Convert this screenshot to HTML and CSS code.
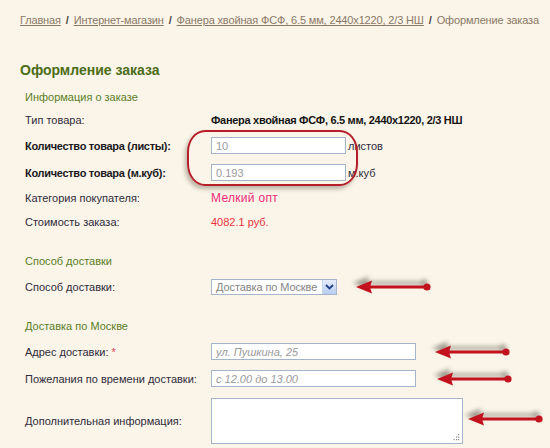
FILE: index.html
```html
<!DOCTYPE html>
<html lang="ru">
<head>
<meta charset="utf-8">
<title>Оформление заказа</title>
<link rel="stylesheet" href="styles.css">
</head>
<body>
<div class="page">
  <div class="crumbs">
    <a href="#">Главная</a><span class="sep">/</span><a href="#">Интернет-магазин</a><span class="sep">/</span><a href="#">Фанера хвойная ФСФ, 6.5 мм, 2440x1220, 2/3 НШ</a><span class="sep">/</span><span class="cur">Оформление заказа</span>
  </div>

  <h1 class="title">Оформление заказа</h1>

  <section class="sec sec-info">
    <h2 class="sec-head">Информация о заказе</h2>
    <div class="row">
      <div class="lbl">Тип товара:</div>
      <div class="val strong">Фанера хвойная ФСФ, 6.5 мм, 2440x1220, 2/3 НШ</div>
    </div>
    <div class="row field">
      <div class="lbl bold">Количество товара (листы):</div>
      <div class="val"><input class="inp inp-s" type="text" value="10"><span class="unit">листов</span></div>
    </div>
    <div class="row field">
      <div class="lbl bold">Количество товара (м.куб):</div>
      <div class="val"><input class="inp inp-s" type="text" value="0.193"><span class="unit">м.куб</span></div>
    </div>
    <div class="row">
      <div class="lbl">Категория покупателя:</div>
      <div class="val pink">Мелкий опт</div>
    </div>
    <div class="row">
      <div class="lbl">Стоимость заказа:</div>
      <div class="val price">4082.1 руб.</div>
    </div>
    <div class="highlight"></div>
  </section>

  <section class="sec sec-ship">
    <h2 class="sec-head">Способ доставки</h2>
    <div class="row field">
      <div class="lbl">Способ доставки:</div>
      <div class="val">
        <div class="sel"><span class="sel-text">Доставка по Москве</span><span class="sel-btn"><svg width="9" height="6" viewBox="0 0 9 6"><path d="M1 1 L4.5 4.5 L8 1" fill="none" stroke="#1f3f86" stroke-width="1.8"/></svg></span></div>
        <svg class="arrow" width="76" height="20" viewBox="0 0 76 20"><line x1="10" y1="10" x2="71" y2="10" stroke="#c3121d" stroke-width="3"/><polygon points="0,10 16,3.5 14,10 16,16.5" fill="#c3121d"/><circle cx="71" cy="10" r="3.6" fill="#c3121d"/></svg>
      </div>
    </div>
  </section>

  <section class="sec sec-moscow">
    <h2 class="sec-head">Доставка по Москве</h2>
    <div class="row field">
      <div class="lbl">Адрес доставки: <span class="req">*</span></div>
      <div class="val">
        <input class="inp inp-l" type="text" placeholder="ул. Пушкина, 25">
        <svg class="arrow" width="76" height="20" viewBox="0 0 76 20"><line x1="10" y1="10" x2="71" y2="10" stroke="#c3121d" stroke-width="3"/><polygon points="0,10 16,3.5 14,10 16,16.5" fill="#c3121d"/><circle cx="71" cy="10" r="3.6" fill="#c3121d"/></svg>
      </div>
    </div>
    <div class="row field">
      <div class="lbl">Пожелания по времени доставки:</div>
      <div class="val">
        <input class="inp inp-l" type="text" placeholder="с 12.00 до 13.00">
        <svg class="arrow arrow-t" width="76" height="20" viewBox="0 0 76 20"><line x1="10" y1="10" x2="71" y2="10" stroke="#c3121d" stroke-width="3"/><polygon points="0,10 16,3.5 14,10 16,16.5" fill="#c3121d"/><circle cx="71" cy="10" r="3.6" fill="#c3121d"/></svg>
      </div>
    </div>
    <div class="row area">
      <div class="lbl">Дополнительная информация:</div>
      <div class="val">
        <div class="area-wrap">
          <textarea class="ta"></textarea>
          <svg class="grip" width="7" height="7" viewBox="0 0 7 7"><g fill="#8a8a8a"><rect x="5" y="0" width="1.2" height="1.2"/><rect x="3" y="2.5" width="1.2" height="1.2"/><rect x="5" y="2.5" width="1.2" height="1.2"/><rect x="0.5" y="5" width="1.2" height="1.2"/><rect x="3" y="5" width="1.2" height="1.2"/><rect x="5" y="5" width="1.2" height="1.2"/></g></svg>
        </div>
        <svg class="arrow arrow-a" width="76" height="20" viewBox="0 0 76 20"><line x1="10" y1="10" x2="71" y2="10" stroke="#c3121d" stroke-width="3"/><polygon points="0,10 16,3.5 14,10 16,16.5" fill="#c3121d"/><circle cx="71" cy="10" r="3.6" fill="#c3121d"/></svg>
      </div>
    </div>
  </section>
</div>
</body>
</html>
```
FILE: styles.css
```css
html, body {
  margin: 0;
  padding: 0;
}
body {
  background: #fbf5e9;
  font-family: "Liberation Sans", Arial, sans-serif;
  font-size: 11px;
  color: #2e2a3a;
  overflow: hidden;
}
.page {
  padding: 12px 0 0 20px;
}
.crumbs {
  line-height: 16px;
  font-size: 11px;
  letter-spacing: -0.15px;
  color: #8a7866;
  white-space: nowrap;
}
.crumbs a {
  color: #8a7866;
  text-decoration: underline;
}
.crumbs .sep {
  color: #4a4440;
  font-weight: bold;
  margin: 0 5px;
}
.crumbs .cur {
  color: #8a7866;
}
.title {
  margin: 32px 0 0;
  font-size: 14px;
  line-height: 20px;
  font-weight: bold;
  color: #4b6d18;
}
.sec {
  position: relative;
  margin-left: 5px;
}
.sec-info {
  margin-top: 7px;
}
.sec-ship {
  margin-top: 17px;
}
.sec-moscow {
  margin-top: 16px;
}
.sec-head {
  margin: 0 0 1px;
  font-size: 11px;
  line-height: 20px;
  font-weight: normal;
  color: #5a7d27;
}
.sec-ship .sec-head,
.sec-moscow .sec-head {
  margin-bottom: 2px;
}
.row {
  display: grid;
  grid-template-columns: 186px auto;
  align-items: center;
  height: 24px;
}
.row.field {
  height: 27px;
}
.row.area {
  height: auto;
  padding-top: 6px;
}
.lbl {
  white-space: nowrap;
}
.lbl.bold {
  font-weight: bold;
  letter-spacing: -0.3px;
  color: #1a1820;
}
.val {
  display: flex;
  align-items: center;
  white-space: nowrap;
}
.val.strong {
  font-weight: bold;
  letter-spacing: -0.3px;
  color: #141414;
}
.val.pink {
  color: #ee2a78;
  font-size: 12px;
  letter-spacing: 0.3px;
}
.val.price {
  color: #e6333d;
}
.req {
  color: #e8474f;
}
.inp {
  box-sizing: border-box;
  height: 17px;
  margin: 0;
  border: 1px solid #a3b4cb;
  background: #fff;
  padding: 0 4px;
  font-family: "Liberation Sans", Arial, sans-serif;
  font-size: 11px;
  color: #9a9a9a;
  outline: none;
}
.inp-s {
  width: 135px;
}
.inp-l {
  width: 205px;
}
.inp::placeholder {
  color: #9a9a9a;
  font-style: italic;
}
.unit {
  margin-left: 2px;
  color: #2e2a3a;
}
.sel {
  box-sizing: border-box;
  width: 126px;
  height: 16px;
  border: 1px solid #a3b4cb;
  background: #fff;
  display: flex;
  align-items: center;
  padding-left: 4px;
  color: #858585;
  white-space: nowrap;
  overflow: hidden;
}
.sel-text {
  letter-spacing: -0.1px;
}
.sel-btn {
  margin-left: auto;
  flex: none;
  width: 13px;
  height: 14px;
  background: linear-gradient(#e3ecfc, #b9cdf0);
  border-left: 1px solid #c9d6ec;
  display: flex;
  align-items: center;
  justify-content: center;
}
.arrow {
  flex: none;
  margin-left: 19px;
  filter: drop-shadow(-3px -4px 2px rgba(70, 65, 55, 0.5));
  overflow: visible;
}
.arrow-t {
  margin-left: 21px;
}
.arrow-a {
  margin-left: 5px;
  margin-top: -4px;
}
.area-wrap {
  position: relative;
  width: 252px;
  height: 46px;
  flex: none;
}
.ta {
  box-sizing: border-box;
  display: block;
  width: 252px;
  height: 46px;
  margin: 0;
  border: 1px solid #a3b4cb;
  background: #fff;
  resize: none;
  outline: none;
}
.grip {
  position: absolute;
  right: 3px;
  bottom: 3px;
}
.highlight {
  position: absolute;
  left: 162px;
  top: 43px;
  width: 171px;
  height: 56px;
  box-sizing: border-box;
  border: 2px solid #b41f29;
  border-radius: 18px / 22px;
  box-shadow: -2px 3px 4px rgba(90, 80, 60, 0.4);
  pointer-events: none;
}
```
